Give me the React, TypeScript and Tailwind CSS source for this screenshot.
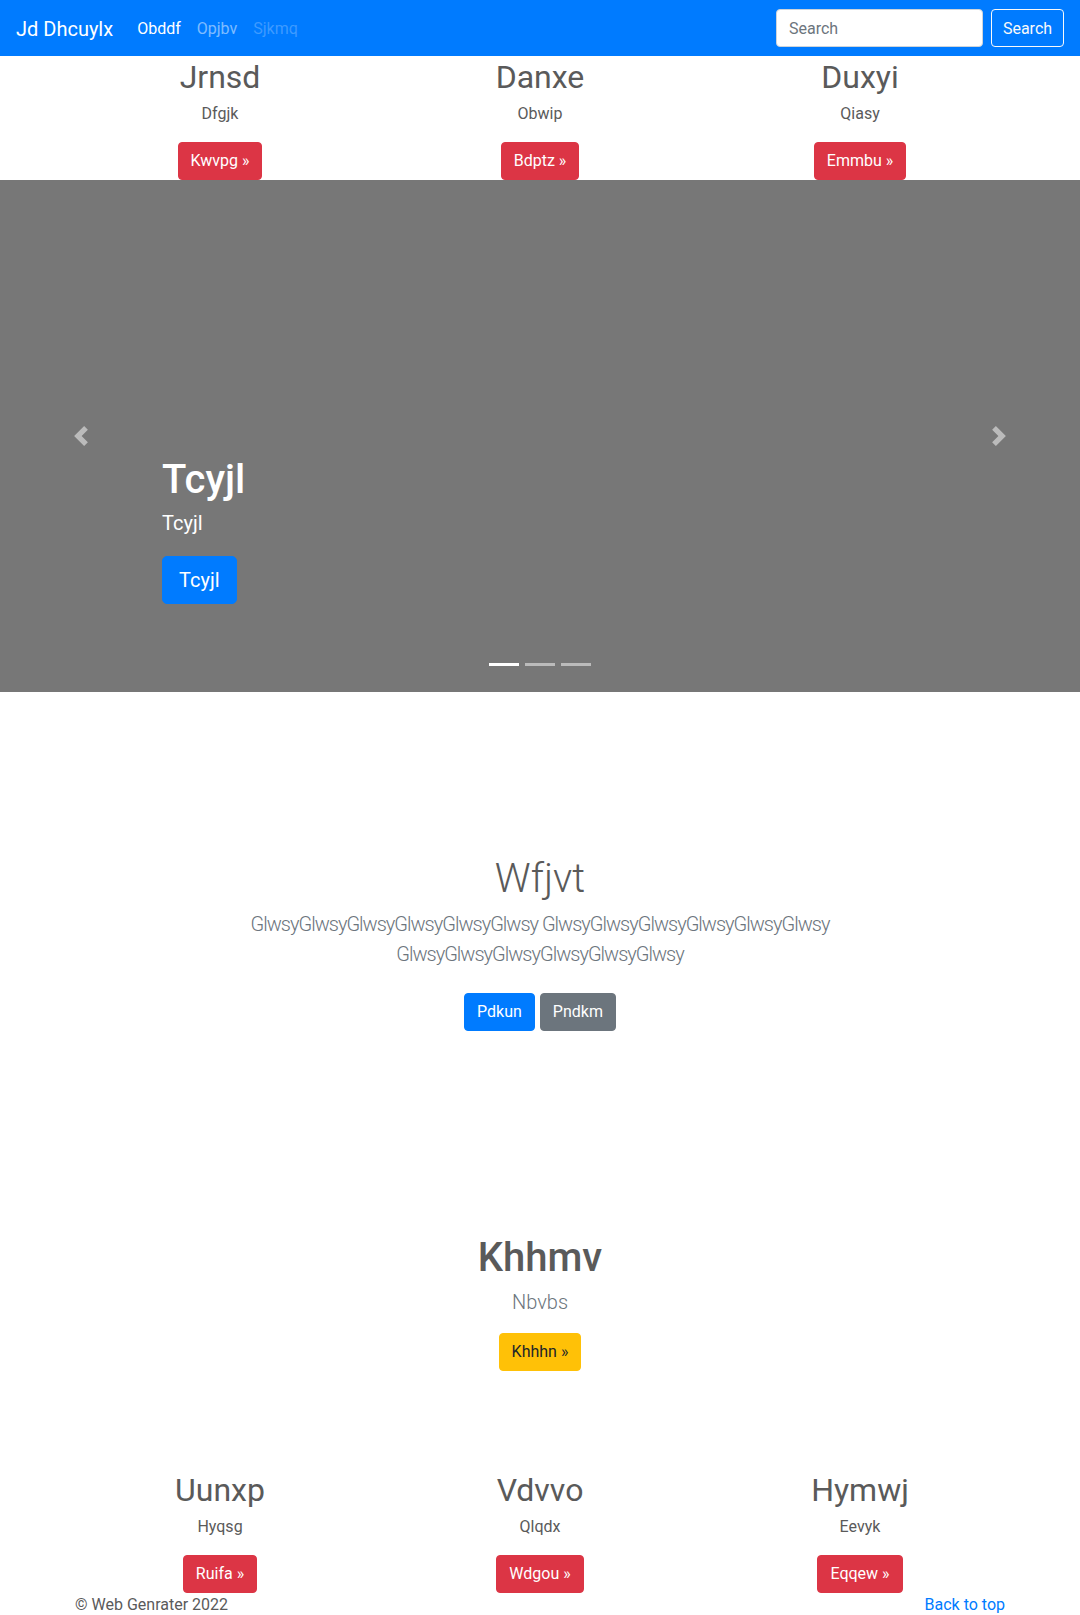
import React from "react";

const cols1 = [
  { t: "Jrnsd", p: "Dfgjk", b: "Kwvpg" },
  { t: "Danxe", p: "Obwip", b: "Bdptz" },
  { t: "Duxyi", p: "Qiasy", b: "Emmbu" },
];
const cols2 = [
  { t: "Uunxp", p: "Hyqsg", b: "Ruifa" },
  { t: "Vdvvo", p: "Qlqdx", b: "Wdgou" },
  { t: "Hymwj", p: "Eevyk", b: "Eqqew" },
];

function Cols({ items }: { items: { t: string; p: string; b: string }[] }) {
  return (
    <div className="mx-auto grid w-[960px] grid-cols-3">
      {items.map((c) => (
        <div key={c.t} className="flex flex-col items-center px-[15px] text-center">
          <h2 className="mb-[6px] pt-[2px] text-[32px] leading-[38px] font-normal text-[#5a5a5a]">{c.t}</h2>
          <p className="mb-4 text-base leading-6 text-[#5a5a5a]">{c.p}</p>
          <button className="h-[38px] rounded border border-[#dc3545] bg-[#dc3545] px-3 text-base leading-6 text-white">
            {c.b} »
          </button>
        </div>
      ))}
    </div>
  );
}

function Chevron({ dir }: { dir: "prev" | "next" }) {
  return (
    <svg width="20" height="20" viewBox="0 0 8 8" fill="#fff">
      <path
        d={
          dir === "prev"
            ? "M5.25 0l-4 4 4 4 1.5-1.5-2.5-2.5 2.5-2.5-1.5-1.5z"
            : "M2.75 0l-1.5 1.5 2.5 2.5-2.5 2.5 1.5 1.5 4-4-4-4z"
        }
      />
    </svg>
  );
}

export default function App() {
  return (
    <div className="bg-white font-[Roboto,'Liberation_Sans',sans-serif] text-[#5a5a5a]">
      <nav className="flex h-14 items-center justify-between bg-[#007bff] px-4">
        <div className="flex items-center pt-[2px]">
          <span className="mr-4 text-[20px] leading-[30px] text-white">Jd Dhcuylx</span>
          <div className="flex text-base leading-6">
            <span className="px-2 text-white">Obddf</span>
            <span className="px-2 text-white/50">Opjbv</span>
            <span className="px-2 text-white/25">Sjkmq</span>
          </div>
        </div>
        <div className="flex items-center">
          <div className="flex h-[38px] w-[207px] items-center rounded border border-[#ced4da] bg-white px-3 pt-[2px] text-base text-[#6c757d]">
            Search
          </div>
          <button className="ml-2 h-[38px] w-[73px] rounded border border-[#f8f9fa] pt-[1px] text-base text-[#f8f9fa]">
            Search
          </button>
        </div>
      </nav>

      <Cols items={cols1} />

      <div className="relative flex h-[512px] flex-col items-start justify-end bg-[#777777] pb-[88px] pl-[162px] text-white">
        <div className="absolute left-0 top-0 flex h-full w-[162px] items-center justify-center opacity-50">
          <Chevron dir="prev" />
        </div>
        <div className="absolute right-0 top-0 flex h-full w-[162px] items-center justify-center opacity-50">
          <Chevron dir="next" />
        </div>
        <h1 className="mb-[4px] pt-[4px] text-[40px] leading-[48px] font-medium">Tcyjl</h1>
        <p className="mb-[18px] text-[20px] leading-[30px]">Tcyjl</p>
        <button className="h-[48px] rounded-[5px] border border-[#007bff] bg-[#007bff] px-4 text-[20px] leading-[30px] text-white">
          Tcyjl
        </button>
        <div className="absolute bottom-[26px] left-0 right-0 flex justify-center gap-[6px]">
          <span className="h-[3px] w-[30px] bg-white" />
          <span className="h-[3px] w-[30px] bg-white/50" />
          <span className="h-[3px] w-[30px] bg-white/50" />
        </div>
      </div>

      <section className="mx-auto mt-[159px] flex max-w-[640px] flex-col items-center px-[15px] text-center">
        <h1 className="mb-[6px] pt-[4px] text-[40px] leading-[48px] font-light text-[#5a5a5a]">Wfjvt</h1>
        <p className="mb-4 text-[20px] leading-[30px] font-light tracking-[-1px] text-[#6c757d]">
          GlwsyGlwsyGlwsyGlwsyGlwsyGlwsy GlwsyGlwsyGlwsyGlwsyGlwsyGlwsy GlwsyGlwsyGlwsyGlwsyGlwsyGlwsy
        </p>
        <div className="mt-2 flex gap-[5px]">
          <button className="h-[38px] rounded border border-[#007bff] bg-[#007bff] px-3 text-base text-white">Pdkun</button>
          <button className="h-[38px] rounded border border-[#6c757d] bg-[#6c757d] px-3 text-base text-white">Pndkm</button>
        </div>
      </section>

      <section className="mt-[200px] flex flex-col items-center text-center">
        <h1 className="mb-[5px] pt-[3px] text-[40px] leading-[48px] font-medium text-[#5a5a5a]">Khhmv</h1>
        <p className="mb-4 text-[20px] leading-[30px] font-light text-[#6c757d]">Nbvbs</p>
        <button className="h-[38px] rounded border border-[#ffc107] bg-[#ffc107] px-3 text-base text-[#212529]">Khhhn »</button>
      </section>

      <div className="mt-[98px]">
        <Cols items={cols2} />
      </div>

      <footer className="mx-auto flex w-[960px] justify-between px-[15px] text-base leading-6">
        <p>© Web Genrater 2022</p>
        <p className="text-[#007bff]">Back to top</p>
      </footer>
    </div>
  );
}
